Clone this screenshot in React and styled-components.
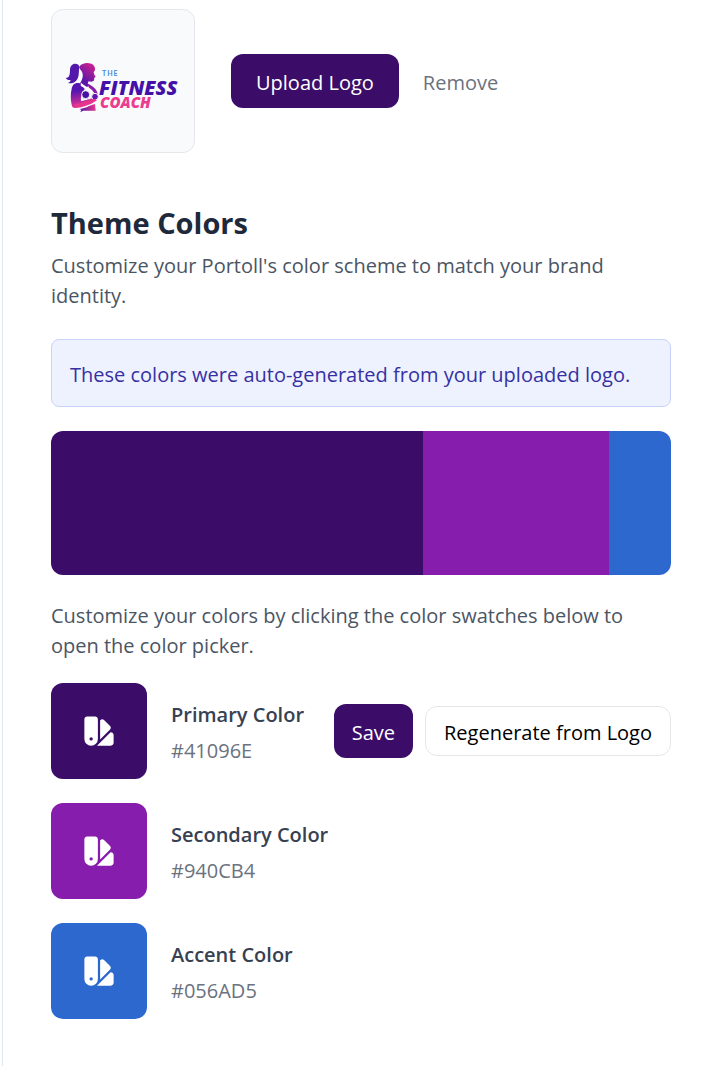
import React from "react";
import styled, { createGlobalStyle } from "styled-components";
import { HiSwatch } from "react-icons/hi2";

const GlobalStyle = createGlobalStyle`
  *, *::before, *::after { box-sizing: border-box; }
  body {
    margin: 0;
    background: #fff;
    color: #4b5563;
    font-family: "Segoe UI", "Open Sans", "Noto Sans", sans-serif;
    font-size: 20px;
    line-height: 30px;
  }
  h2, h3, p { margin: 0; }
  button { font: inherit; cursor: pointer; }
`;

const Panel = styled.main`
  min-height: 100vh;
  margin-left: 2px;
  padding: 9px 41px 47px 48px;
  border-left: 1px solid #e2e8f0;
`;

const LogoRow = styled.section`
  display: flex;
  align-items: center;
  margin-bottom: 49px;
`;

const LogoCard = styled.div`
  width: 144px;
  height: 144px;
  margin-right: 36px;
  border: 1px solid #e5e7eb;
  border-radius: 12px;
  background: #f9fafb;
  svg { display: block; }
`;

const SolidButton = styled.button`
  height: 54px;
  padding: 4px ${(p) => (p.$compact ? 18 : 25)}px 0;
  border: 0;
  border-radius: 12px;
  background: #3b0d69;
  color: #fff;
  white-space: nowrap;
`;

const OutlineButton = styled.button`
  height: 50px;
  padding: 4px 18px 0;
  border: 1px solid #e5e7eb;
  border-radius: 12px;
  background: #fff;
  color: #000;
  white-space: nowrap;
`;

const TextButton = styled.button`
  padding: 4px 24px 0;
  border: 0;
  background: none;
  color: #6b7280;
`;

const Heading = styled.h2`
  margin-bottom: 7px;
  color: #1e293b;
  font-size: 29px;
  line-height: 42px;
  font-weight: 700;
`;

const Notice = styled.p`
  margin: 28px 0 24px;
  padding: 20px 18px 16px;
  border: 1px solid #c7d2fe;
  border-radius: 8px;
  background: #eef2ff;
  color: #3730a3;
`;

const Palette = styled.div`
  display: flex;
  height: 144px;
  margin-bottom: 26px;
  border-radius: 12px;
  overflow: hidden;
`;

const PaletteBand = styled.div`
  flex: ${(p) => p.$share};
  background: ${(p) => p.$color};
`;

const ColorList = styled.div`
  display: grid;
  gap: 24px;
  margin-top: 22px;
`;

const ColorRow = styled.div`
  display: flex;
  align-items: center;
  gap: 24px;
`;

const SwatchButton = styled.button`
  display: grid;
  place-items: center;
  flex: none;
  width: 96px;
  height: 96px;
  padding: 0;
  border: 0;
  border-radius: 12px;
  background: ${(p) => p.$color};
  color: #fff;
`;

const ColorLabel = styled.div`
  padding-top: 4px;
`;

const ColorName = styled.h3`
  margin-bottom: 6px;
  color: #374151;
  font-size: 20px;
  font-weight: 600;
  white-space: nowrap;
`;

const ColorCode = styled.p`
  color: #6b7280;
`;

const Actions = styled.div`
  display: flex;
  align-items: center;
  gap: 12px;
  margin-left: auto;
`;

const LogoWord = styled.text`
  font-family: "Open Sans", sans-serif;
  font-weight: 800;
  font-style: italic;
  font-size: ${(p) => p.$size}px;
`;

const LogoTag = styled.text`
  font-family: Lato, sans-serif;
  font-weight: 700;
  font-size: 7px;
  letter-spacing: 1px;
`;

const colors = [
  { name: "Primary Color", code: "#41096E", fill: "#3b0d69", share: 6 },
  { name: "Secondary Color", code: "#940CB4", fill: "#871dac", share: 3 },
  { name: "Accent Color", code: "#056AD5", fill: "#2d68cf", share: 1 },
];

function CoachLogo() {
  return (
    <svg width="142" height="142" viewBox="52 10 142 142" role="img" aria-label="The Fitness Coach">
      <defs>
        <linearGradient id="head" x1="85" y1="95" x2="130" y2="42" gradientUnits="userSpaceOnUse">
          <stop offset="0.2" stopColor="#5a18a8" />
          <stop offset="1" stopColor="#d3218f" />
        </linearGradient>
        <linearGradient id="arm" x1="75" y1="100" x2="84" y2="172" gradientUnits="userSpaceOnUse">
          <stop offset="0.3" stopColor="#5415b0" />
          <stop offset="1" stopColor="#e8348d" />
        </linearGradient>
        <linearGradient id="waist" x1="92" y1="180" x2="134" y2="168" gradientUnits="userSpaceOnUse">
          <stop offset="0" stopColor="#5a18a8" />
          <stop offset="1" stopColor="#e8348d" />
        </linearGradient>
      </defs>
      <g transform="translate(50 50) scale(0.3333)">
        <path fill="#5217ab" d="M85 44C72 37 60 45 60 60c0 14-2 24-13 24 5 6 10 7 15 6-1 5-4 8-8 9 17 4 30-7 32-25 1-8 0-16 3-22z" />
        <path fill="url(#head)" d="M88 50c8-14 36-15 44-3 5 8 4 15-1 19l2 8 4 6-4 3-1 8c-3 5-9 5-16 3l-3 6 5 8c-12 6-20 4-28-8 8-12 12-27 4-38-4-4-6-8-6-12z" />
        <path fill="url(#arm)" d="M88 99c-14-2-21 5-23 17-4 17-3 35 0 48 1 10 9 12 18 8l42-15 16-9-6-6-18 6-24 6c-2-14 2-25 11-37-3-9-10-13-16-18z" />
        <path fill="#8a1daa" d="M112 100c8 5 18 10 24 17 6 7 8 16 8 25l-5 5c-2-15-10-27-22-34z" />
        <path fill="#fff" d="M93 98c14 12 31 18 40 38l-5 2c-9-16-24-23-36-31z" />
        <circle cx="107" cy="134" r="12" fill="#4512a5" stroke="#f9fafb" strokeWidth="3" />
        <circle cx="135" cy="140" r="10" fill="#6016b1" stroke="#f9fafb" strokeWidth="3" />
        <path fill="#e8348d" d="M73 163c17-1 31-10 49-15l14-1 5 4-17 10c-18 6-31 13-48 12z" />
        <path fill="url(#waist)" d="M88 177c16-1 27-9 47-15l2 20h-34c-5 0-8 2-12 5l3-8z" />
      </g>
      <LogoTag x="102" y="76" fill="#3f8add">THE</LogoTag>
      <LogoWord x="99" y="95" $size={20} fill="#4411a8">FITNESS</LogoWord>
      <LogoWord x="100" y="108" $size={15} fill="#ed3b8f">COACH</LogoWord>
    </svg>
  );
}

export default function App() {
  return (
    <>
      <GlobalStyle />
      <Panel>
        <LogoRow>
          <LogoCard><CoachLogo /></LogoCard>
          <SolidButton type="button">Upload Logo</SolidButton>
          <TextButton type="button">Remove</TextButton>
        </LogoRow>
        <Heading>Theme Colors</Heading>
        <p>Customize your Portoll's color scheme to match your brand identity.</p>
        <Notice>These colors were auto-generated from your uploaded logo.</Notice>
        <Palette>
          {colors.map((c) => <PaletteBand key={c.code} $share={c.share} $color={c.fill} />)}
        </Palette>
        <p>Customize your colors by clicking the color swatches below to open the color picker.</p>
        <ColorList>
          {colors.map((c, i) => (
            <ColorRow key={c.code}>
              <SwatchButton type="button" $color={c.fill} aria-label={`Pick ${c.name}`}>
                <HiSwatch size={36} />
              </SwatchButton>
              <ColorLabel>
                <ColorName>{c.name}</ColorName>
                <ColorCode>{c.code}</ColorCode>
              </ColorLabel>
              {i === 0 && (
                <Actions>
                  <SolidButton type="button" $compact>Save</SolidButton>
                  <OutlineButton type="button">Regenerate from Logo</OutlineButton>
                </Actions>
              )}
            </ColorRow>
          ))}
        </ColorList>
      </Panel>
    </>
  );
}
